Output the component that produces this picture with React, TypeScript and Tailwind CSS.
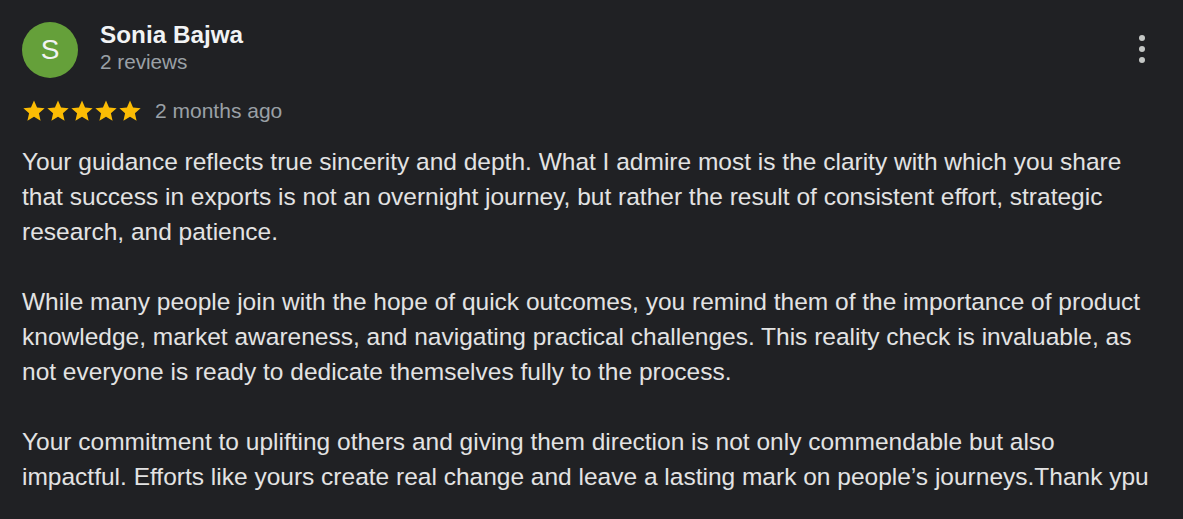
import React from "react";

const Star = () => (
  <svg width="24" height="24" viewBox="0 0 24 24" className="block">
    <path
      d="M12 1.6l3.05 7.02 7.6.68-5.75 5.02 1.7 7.46L12 17.86 5.4 21.78l1.7-7.46L1.35 9.3l7.6-.68z"
      fill="#fbbc04"
    />
  </svg>
);

export default function App() {
  return (
    <div
      className="min-h-[519px] w-full bg-[#202124] pl-[22px] pr-[27px] pt-[21px] pb-[25px]"
      style={{ fontFamily: '"Liberation Sans", Arial, sans-serif' }}
    >
      <div className="flex items-start">
        <div className="mt-px flex h-[56px] w-[56px] shrink-0 items-center justify-center rounded-full bg-[#65a03a] text-[28px] leading-none text-[#f1f3f4]">
          S
        </div>
        <div className="ml-[22px] flex flex-col">
          <div className="text-[24.3px] font-bold leading-[28px] text-[#f1f3f4]">Sonia Bajwa</div>
          <div className="mt-px text-[20.7px] leading-[24px] text-[#9aa0a6]">2 reviews</div>
        </div>
        <div className="ml-auto mr-[8px] self-center pb-[2px]">
          <svg width="12" height="30" viewBox="0 0 12 30" className="block">
            <circle cx="6" cy="4" r="3" fill="#c4c7c5" />
            <circle cx="6" cy="15" r="3" fill="#c4c7c5" />
            <circle cx="6" cy="26" r="3" fill="#c4c7c5" />
          </svg>
        </div>
      </div>

      <div className="mt-[21px] flex items-center">
        <div className="flex">
          <Star />
          <Star />
          <Star />
          <Star />
          <Star />
        </div>
        <span className="ml-[13px] text-[21px] leading-[24px] text-[#9aa0a6]">2 months ago</span>
      </div>

      <div className="mt-[21px] whitespace-nowrap text-[24.5px] leading-[35px] text-[#e3e3e3]">
        <p>
          Your guidance reflects true sincerity and depth. What I admire most is the clarity with which you share
          <br />
          that success in exports is not an overnight journey, but rather the result of consistent effort, strategic
          <br />
          research, and patience.
        </p>
        <p className="mt-[35px]">
          While many people join with the hope of quick outcomes, you remind them of the importance of product
          <br />
          knowledge, market awareness, and navigating practical challenges. This reality check is invaluable, as
          <br />
          not everyone is ready to dedicate themselves fully to the process.
        </p>
        <p className="mt-[35px]">
          Your commitment to uplifting others and giving them direction is not only commendable but also
          <br />
          impactful. Efforts like yours create real change and leave a lasting mark on people’s journeys.Thank ypu
        </p>
      </div>
    </div>
  );
}
